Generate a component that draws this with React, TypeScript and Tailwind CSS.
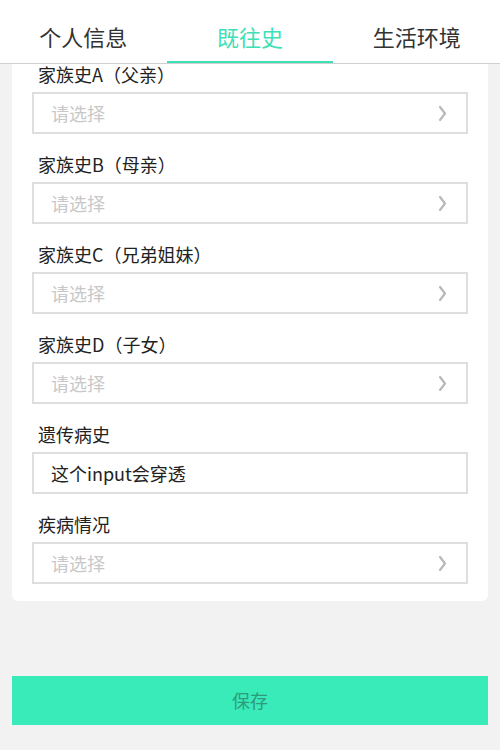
import { useState } from "react"

const tabs = ["个人信息", "既往史", "生活环境"]

const fields = [
  { label: "家族史A（父亲）", type: "select" },
  { label: "家族史B（母亲）", type: "select" },
  { label: "家族史C（兄弟姐妹）", type: "select" },
  { label: "家族史D（子女）", type: "select" },
  { label: "遗传病史", type: "input", value: "这个input会穿透" },
  { label: "疾病情况", type: "select" },
]

function Chevron() {
  return (
    <svg width="9" height="17" viewBox="0 0 9 17" className="text-[#b8b8b8]">
      <path d="M2 2l5 6.5-5 6.5" fill="none" stroke="currentColor" strokeWidth="2.2" strokeLinecap="round" strokeLinejoin="round" />
    </svg>
  )
}

export default function App() {
  const [active, setActive] = useState(1)

  return (
    <div className="min-h-[750px] bg-[#f2f2f2] font-['Noto_Sans_CJK_SC','Noto_Sans',sans-serif]">
      <div className="flex h-[64px] border-b border-[#cfcfcf] bg-white">
        {tabs.map((tab, i) => (
          <button
            key={tab}
            onClick={() => setActive(i)}
            className={
              i === active
                ? "relative flex-1 pt-[9px] text-[22px] text-[#3ee0b5]"
                : "relative flex-1 pt-[9px] text-[22px] text-[#333]"
            }
          >
            {tab}
            {i === active && <span className="absolute bottom-0 left-0 right-0 h-[2px] bg-[#3ee0b5]" />}
          </button>
        ))}
      </div>

      <div className="mx-3 rounded-b-md bg-white px-5 pb-[17px]">
        {fields.map((f, i) => (
          <div key={f.label} className={i === 0 ? "" : "mt-[20px]"}>
            <div className="h-[20px] pl-[6px] text-[18px] leading-[20px] text-[#222]">{f.label}</div>
            <div className="mt-[8px] flex h-[42px] items-center justify-between border-2 border-[#dedede] pl-[17px] pr-[19px] text-[18px]">
              {f.type === "input" ? (
                <span className="text-[#222]">{f.value}</span>
              ) : (
                <>
                  <span className="text-[#c8c8c8]">请选择</span>
                  <Chevron />
                </>
              )}
            </div>
          </div>
        ))}
      </div>

      <div className="mx-3 mt-[75px]">
        <button className="h-[49px] w-full bg-[#38ebb9] text-[18px] text-[#2f9a7c]">保存</button>
      </div>
    </div>
  )
}
